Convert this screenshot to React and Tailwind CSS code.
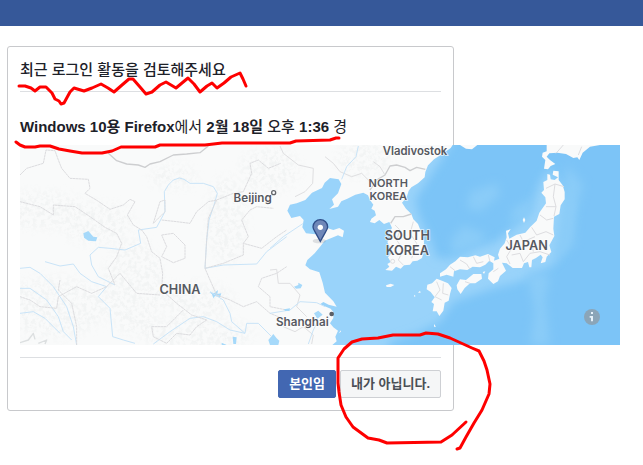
import React from "react";

const mainland =
  "M-750 15H548L542 24L520 40L492 58L474 76L466 96L464 112L444 130L424 142L416 152L410 172L396 188L408 206L424 222L430 238L444 252L452 272L458 286L462 306L460 338L456 354L442 362L428 364L420 374L402 376L392 386L378 380L366 392L346 390L358 380L352 372L362 366L354 352L364 340L360 322L352 306L362 294L358 276L366 264L358 246L342 252L328 240L314 250L300 246L304 236L318 226L314 212L304 206L310 194L300 180L294 166L280 158L256 164L232 176L214 184L204 200L178 207L192 194L186 178L204 160L214 132L206 118L180 114L164 128L156 144L126 158L106 180L80 190L60 194L52 212L64 234L90 228L101 240L97 262L108 280L136 283L164 262L190 270L208 264L222 272L218 292L204 286L184 294L164 302L152 318L134 340L112 360L106 376L120 388L148 397L158 428L165 458L190 484L200 500L176 494L160 486L150 493L182 506L190 516L190 534L180 550L190 562L204 572L196 590L200 604L187 615H-750Z";

const honshu =
  "M0 400L18 388L30 374L46 364L60 350L84 352L106 346L120 350L144 342L164 352L162 362L178 356L174 344L180 326L194 310L200 292L198 272L212 268L204 280L208 296L230 284L256 278L270 262L290 242L298 218L318 190L316 172L304 158L312 150L310 126L322 120L322 102L330 104L332 118L344 120L354 112L338 104L340 92L356 94L356 120L368 136L374 156L374 178L362 196L358 222L342 230L340 266L343 288L328 316L334 336L320 350L316 366L302 370L308 352L302 344L288 354L276 360L274 382L268 382L264 366L252 370L246 384L218 384L200 370L186 368L198 392L180 408L174 424L160 432L144 416L146 400L160 388L160 370L148 362L136 374L120 382L98 380L82 390L60 388L42 394L40 410L20 404L0 410Z";

const relief = [
  { cx: 95, cy: 210, rx: 140, ry: 55 },
  { cx: 260, cy: 250, rx: 110, ry: 60 },
  { cx: 370, cy: 440, rx: 90, ry: 140 },
  { cx: 130, cy: 500, rx: 160, ry: 90 },
  { cx: 650, cy: 240, rx: 60, ry: 130 },
  { cx: 490, cy: 110, rx: 70, ry: 35 },
  { cx: 560, cy: 480, rx: 110, ry: 50 },
  { cx: 780, cy: 90, rx: 90, ry: 65 },
  { cx: 560, cy: 580, rx: 170, ry: 50 },
  { cx: 1060, cy: 60, rx: 80, ry: 50 },
];

const borders = [
  "M30 105L50 85L100 70L108 30L135 32L145 60L155 85L180 115L235 118L240 145L225 160L262 182L300 208L340 195L360 178L375 185L352 225L370 255L395 270L410 290L425 335L450 355L458 400L455 450L500 490L545 525L590 540",
  "M30 185L90 200L130 225L130 195L195 200L240 230L285 262L320 280L335 310L320 350L295 385L315 435",
  "M455 240L500 245L540 250L560 215L595 185L620 180L595 235L590 300L585 385L600 420L620 465L660 480L700 500L740 485L780 520L830 540",
  "M455 285L490 280L525 315L525 355L490 368L455 350L470 320Z",
  "M585 385L640 370L700 345L700 310L755 325L800 290L830 270",
  "M620 180L670 160L700 155L725 100L720 70L745 60L775 85L812 70",
  "M830 380L800 400L755 415L745 440L780 470L780 500L830 510",
  "M150 420L145 450L185 490L200 560L200 615",
  "M30 470L60 480L90 500L140 505L145 470L200 440L245 460L290 440L330 400L380 460L450 465",
  "M590 540L560 560L540 585L500 580L470 610L430 590L425 560L470 560L520 510",
  "M700 310L715 290L695 240L720 210L740 200L790 205",
  "M430 250L450 185L465 180L465 215L440 240Z",
];

const rivers = [
  "M385 270L440 262L465 215L463 155L475 135L490 120L508 114L522 118L540 130L580 130L610 140L622 160L612 195L597 240L590 300L585 385L640 375L740 372L770 335L830 290",
  "M315 435L265 410L245 375L240 345L265 322L300 325L345 330L392 310L385 270",
  "M30 385L60 382L90 400L130 440L170 500L190 560L200 615",
  "M30 445L60 445L110 480L145 530L160 575L185 600",
  "M105 365L150 378L190 372L210 400L245 425L290 440L265 470L300 505L308 590L340 600L375 610",
  "M430 612L480 575L540 535L580 530L620 545L660 570L705 580L710 550L745 550L785 590",
  "M600 455L640 480L660 520L665 545L705 580",
  "M30 520L70 515L105 535L130 560L150 580",
];

const labels = [
  { text: "CHINA", x: 480, y: 448, size: 38 },
  { text: "Beijing", x: 698, y: 170, size: 35 },
  { text: "Shanghai", x: 847, y: 544, size: 35 },
  { text: "Vladivostok", x: 1185, y: 29, size: 34 },
  { text: "NORTH", x: 1105, y: 125, size: 33 },
  { text: "KOREA", x: 1105, y: 166, size: 33 },
  { text: "SOUTH", x: 1162, y: 284, size: 38 },
  { text: "KOREA", x: 1162, y: 330, size: 38 },
  { text: "JAPAN", x: 1520, y: 316, size: 38 },
];

const LoginMap = () => (
  <svg
    viewBox="0 0 1800 600"
    className="block h-[200px] w-[600px] max-w-none"
    role="img"
    aria-label="지도"
  >
    <defs>
      <filter id="soft" x="-30%" y="-30%" width="160%" height="160%">
        <feGaussianBlur stdDeviation="14" />
      </filter>
      <filter id="grain" x="0" y="0" width="100%" height="100%">
        <feTurbulence type="fractalNoise" baseFrequency="0.08" numOctaves="3" seed="4" />
        <feColorMatrix values="0 0 0 0 0.89  0 0 0 0 0.905  0 0 0 0 0.905  5 0 0 0 -2.2" />
      </filter>
      <clipPath id="land">
        <path d={mainland} transform="translate(750 -15)" />
      </clipPath>
      <mask id="reliefMask">
        <g transform="translate(-30 -15)" fill="#fff" filter="url(#soft)">
          {relief.map((r, i) => (
            <ellipse key={i} {...r} />
          ))}
        </g>
      </mask>
    </defs>

    {/* Sea, with the deeper basins on top */}
    <rect width="1800" height="600" fill="#99d3fa" />
    <path
      d="M1330 -60H1900V700H1080L1110 590L1190 565L1260 530L1300 470L1420 430L1500 410L1600 360L1640 290L1660 180L1590 70L1560 110L1530 200L1480 250L1420 295L1370 305L1300 340L1250 340L1230 280L1200 220L1185 165L1210 125L1240 80Z"
      fill="#7bc4f7"
      filter="url(#soft)"
    />
    <g fill="#8accf8" filter="url(#soft)">
      <path d="M1350 140L1430 115L1440 150L1380 200L1340 190Z" />
      <path d="M1290 290L1330 240L1400 270L1380 300L1300 330Z" />
      <path d="M1480 190L1540 160L1530 210L1470 240Z" />
      <path d="M1520 380L1590 390L1575 460L1590 600H1530L1545 500Z" />
      <path d="M1640 60L1690 120L1665 200L1660 300L1600 350L1620 200Z" />
    </g>

    {/* Land */}
    <g fill="#f9fafa">
      <g transform="translate(750 -15)">
        <path d={mainland} />
        <path d="M570 15L588 26L606 28L622 15Z" />
        <path d="M472 434L486 430L500 416L516 422L534 430L545 444L540 462L536 482L524 488L520 512L508 528L500 514L488 514L492 492L484 486L494 472L482 456L470 448Z" />
        <path d="M348 436L362 431L373 435L362 441L350 441Z" />
        <path d="M444 458L450 452L452 458ZM432 464L437 468L433 471ZM492 552L498 560L492 560ZM206 580L213 571L213 575Z" />
      </g>
      <g transform="translate(1260 -15)">
        <path d={honshu} />
        <path d="M50 436L60 418L78 420L100 402L124 402L126 416L106 430L90 430L74 444L62 462L52 448Z" />
        <path d="M320 15L320 34L308 38L306 50L316 60L312 86L324 88L332 78L346 72L330 60L320 50L328 40L352 38L378 42L400 54L412 52L418 60L428 38L450 20L480 15Z" />
        <path d="M252 232L256 240L252 249L248 240ZM128 396L136 394L132 402Z" />
      </g>
    </g>
    <g clipPath="url(#land)">
      <g mask="url(#reliefMask)">
        <rect width="1300" height="600" filter="url(#grain)" />
      </g>
    </g>

    {/* Lakes, rivers and borders */}
    <g transform="translate(-30 -15)" fill="none" strokeLinejoin="round">
      <path d="M220 280L235 273L250 290L262 292L258 304L235 302L222 293Z" fill="#a6d9fa" />
      <path
        d="M598 456L612 460L624 450L622 462L634 460L630 472L615 468L610 475L606 463ZM668 590L680 592L678 612L670 612ZM635 608L650 615H635ZM775 600L790 582L800 595L808 602L805 615H780Z"
        fill="#a6d9fa"
      />
      <path d={rivers.join("")} stroke="#c9e4f8" strokeWidth="3" />
      <path d={borders.join("")} stroke="#dcdcdf" strokeWidth="3" strokeDasharray="8 1" />
      <path
        d="M295 40L320 62L350 72L385 75L405 82L420 72L450 65L490 45L530 42L570 38L595 18"
        stroke="#cdced0"
        strokeWidth="4"
      />
      <path d="M30 608L55 600L70 580L75 598M85 610L110 600L105 612" stroke="#dcdfe0" strokeWidth="4" />
    </g>
    <g transform="translate(750 -15)" fill="none" strokeLinejoin="round">
      <path
        d="M466 88L440 82L420 92L405 82L380 75L360 78L345 105L320 120L300 150M424 222L400 230L375 230L362 250"
        stroke="#cdced0"
        strokeWidth="4"
      />
      <path
        d="M30 18L40 40L85 75L130 85L128 130L105 155L75 170M165 50L190 70L210 95L245 110L275 100L300 125M0 390L20 388L25 430L60 430L90 465L80 500L110 530M375 255L390 270L380 300L400 330L385 360L400 375M430 245L420 280L440 310L425 355M40 560L75 575L100 560L130 585L125 612M310 65L330 80L345 105"
        stroke="#dfdfe1"
        strokeWidth="3"
      />
      <path
        d="M0 325L40 290L100 250M265 18L258 50L230 80L215 118M0 520L60 510L90 485L140 488L165 500M115 612L130 570L145 540"
        stroke="#c9e4f8"
        strokeWidth="3"
      />
      <path
        d="M72 440L85 435L85 428L97 435L92 445L78 446ZM42 508L60 505L58 513H45ZM132 520L145 512L158 524L142 536Z"
        fill="#a6d9fa"
      />
      <circle cx="368" cy="364" r="6" stroke="#dfdfe1" strokeWidth="3" />
      <path d="M500 425L510 450L495 470L515 480M520 430L518 460L535 465" stroke="#dfdfe1" strokeWidth="3" />
    </g>
    <g transform="translate(1260 -15)" fill="none" stroke="#dddde0" strokeWidth="3">
      <path d="M318 145L345 132L372 140M345 132L340 170L348 200L318 200M348 200L342 228M300 225L320 240L340 235M275 262L290 285L318 275L340 285M240 285L250 305L285 290M200 300L215 325L200 350L210 372M215 345L240 340L250 365M250 365L270 340L300 335L330 345M275 310L280 335M145 345L150 365M100 350L110 370L130 365M60 360L80 372L90 388M30 380L45 392M75 425L90 430M160 395L175 385M348 40L370 15M425 20L415 45" />
    </g>

    {/* Place names */}
    <g
      fontFamily="Inter, Roboto, sans-serif"
      fontWeight="600"
      fill="#565961"
      stroke="#ffffff"
      strokeWidth="5"
      strokeOpacity="0.7"
      paintOrder="stroke"
      textAnchor="middle"
    >
      {labels.map(({ text, x, y, size }) => (
        <text key={text + y} x={x} y={y} fontSize={size}>
          {text}
        </text>
      ))}
    </g>
    <circle cx="761" cy="143" r="6" fill="#fff" stroke="#64676c" strokeWidth="4" />
    <circle cx="935" cy="507" r="7" fill="#5c5f66" />

    {/* Pin */}
    <ellipse cx="898" cy="288" rx="20" ry="7" fill="#8a8f99" opacity="0.25" />
    <path
      d="M901 289L886 262Q879 251 879 246A22 22 0 0 1 923 246Q923 251 916 262Z"
      fill="#6f87b8"
      stroke="#2f4d88"
      strokeWidth="4"
    />
    <circle cx="901" cy="247" r="8" fill="#fff" />

    {/* Info badge */}
    <circle cx="1716" cy="516" r="24" fill="#8ba5b8" />
    <path d="M1713 501H1719V507H1713ZM1709 513H1719V529H1713V518H1709Z" fill="#e6f2fb" />
  </svg>
);

const Markup = () => (
  <svg
    width="643"
    height="465"
    viewBox="0 0 643 465"
    className="pointer-events-none absolute top-0 left-0"
    fill="none"
    stroke="#fe0000"
    strokeWidth="3"
    strokeLinecap="round"
    strokeLinejoin="round"
    aria-hidden="true"
  >
    <path d="M19 86L25 86L31 88L35 91L40 87L46 87L52 93L55 99L59 101L61 104L64 103L70 92L74 88L84 91L92 88L101 84L108 88L114 92L122 85L129 79L133 79L140 87L146 94L152 92L160 85L166 82L171 85L176 88L182 83L188 78L194 84L200 92L207 86L212 83L217 88L224 83L231 77L240 73L243 79L246 86" />
    <path d="M16 142L20 145L25 147L35 147L40 146L50 146L59 149L70 151L82 153L102 153L112 151L121 147L155 147L160 145L205 145L222 143L290 143L296 141L330 140L336 138L339 138" />
    <path d="M466 422L452 435L441 442L387 443L379 440L368 438L353 427L346 417L341 405L339 392L338 383L338 358L344 349L352 342L362 339L378 338L393 335L420 335L426 333L438 334L450 338L461 343L472 348L479 351L484 361L487 370L490 384L489 394L482 410L474 423L466 437L460 448L457 449" />
  </svg>
);

const App = () => {
  return (
    <div className="relative min-h-[465px] overflow-hidden bg-white font-['Liberation_Sans','Noto_Sans_CJK_KR',sans-serif] text-[#1d2129]">
      <header className="h-[26px] bg-[#365899]" />

      <main className="px-[7px] pt-5">
        <section className="max-w-[447px] rounded-[3px] border border-[#c8c9cc] px-3 pb-3">
          <h1 className="border-b border-[#dddfe2] pt-3 pb-2.5 text-[15px] leading-[22px] font-medium">
            최근 로그인 활동을 검토해주세요
          </h1>

          <p className="pt-6 pb-2 text-[15px] leading-[21px]">
            <b>Windows 10용</b> <b>Firefox</b>에서 <b>2월 18일</b> <span className="font-medium">오후</span>{" "}
            <b>1:36</b> 경
          </p>
          <LoginMap />

          <div className="mt-3 flex justify-end gap-1 border-t border-[#dddfe2] pt-3">
            <button
              type="button"
              className="h-7 rounded-xs border border-[#4267b2] bg-[#4267b2] px-2.5 text-[13px] leading-[26px] font-bold text-white"
            >
              본인임
            </button>
            <button
              type="button"
              className="h-7 rounded-xs border border-[#ced0d4] bg-[#f5f6f7] px-2.5 text-[13px] leading-[26px] font-bold text-[#4b4f56]"
            >
              내가 아닙니다.
            </button>
          </div>
        </section>
      </main>

      <Markup />
    </div>
  );
};

export default App;
